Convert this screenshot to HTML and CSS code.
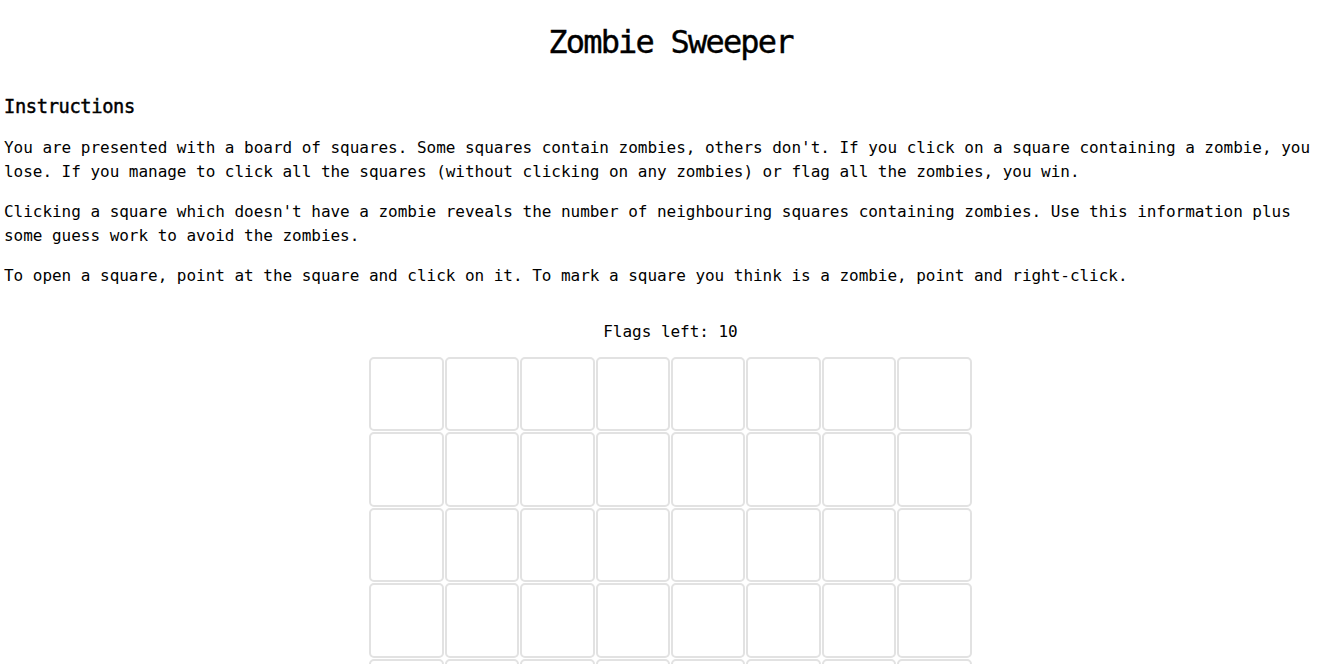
FILE: index.html
```html
<!DOCTYPE html>
<html lang="en">
<head>
<meta charset="utf-8">
<title>Zombie Sweeper</title>
<link rel="stylesheet" href="styles.css">
</head>
<body>
<main class="page">
  <h1 class="title">Zombie Sweeper</h1>
  <h3 class="subtitle">Instructions</h3>
  <p class="text">You are presented with a board of squares. Some squares contain zombies, others don't. If you click on a square containing a zombie, you lose. If you manage to click all the squares (without clicking on any zombies) or flag all the zombies, you win.</p>
  <p class="text">Clicking a square which doesn't have a zombie reveals the number of neighbouring squares containing zombies. Use this information plus some guess work to avoid the zombies.</p>
  <p class="text">To open a square, point at the square and click on it. To mark a square you think is a zombie, point and right-click.</p>
  <section class="game">
    <div class="flags">Flags left: 10</div>
    <div class="board">
      <div class="cell"></div><div class="cell"></div><div class="cell"></div><div class="cell"></div><div class="cell"></div><div class="cell"></div><div class="cell"></div><div class="cell"></div>
      <div class="cell"></div><div class="cell"></div><div class="cell"></div><div class="cell"></div><div class="cell"></div><div class="cell"></div><div class="cell"></div><div class="cell"></div>
      <div class="cell"></div><div class="cell"></div><div class="cell"></div><div class="cell"></div><div class="cell"></div><div class="cell"></div><div class="cell"></div><div class="cell"></div>
      <div class="cell"></div><div class="cell"></div><div class="cell"></div><div class="cell"></div><div class="cell"></div><div class="cell"></div><div class="cell"></div><div class="cell"></div>
      <div class="cell"></div><div class="cell"></div><div class="cell"></div><div class="cell"></div><div class="cell"></div><div class="cell"></div><div class="cell"></div><div class="cell"></div>
      <div class="cell"></div><div class="cell"></div><div class="cell"></div><div class="cell"></div><div class="cell"></div><div class="cell"></div><div class="cell"></div><div class="cell"></div>
      <div class="cell"></div><div class="cell"></div><div class="cell"></div><div class="cell"></div><div class="cell"></div><div class="cell"></div><div class="cell"></div><div class="cell"></div>
      <div class="cell"></div><div class="cell"></div><div class="cell"></div><div class="cell"></div><div class="cell"></div><div class="cell"></div><div class="cell"></div><div class="cell"></div>
    </div>
  </section>
</main>
</body>
</html>
```

FILE: styles.css
```css
html, body {
  margin: 0;
  padding: 0;
  background: #ffffff;
}

body {
  font-family: "DejaVu Sans Mono", "Liberation Mono", monospace;
  font-size: 16px;
  line-height: 24px;
  color: #000000;
  letter-spacing: -0.03px;
}

.page {
  padding: 0 4px;
}

.title {
  margin: 18px 0 0;
  font-size: 32px;
  line-height: 48px;
  font-weight: normal;
  text-align: center;
  letter-spacing: -1.8px;
  -webkit-text-stroke: 0.4px #000000;
}

.subtitle {
  margin: 27px 0 0;
  font-size: 18.72px;
  line-height: 28px;
  font-weight: normal;
  letter-spacing: -0.35px;
  -webkit-text-stroke: 0.45px #000000;
}

.text {
  margin: 15px 0 16px;
}

.text + .text {
  margin-top: 16px;
}

.game {
  margin-top: 32px;
  display: flex;
  flex-direction: column;
  align-items: center;
}

.flags {
  line-height: 24px;
  margin-bottom: 13px;
}

.board {
  display: grid;
  grid-template-columns: repeat(8, 74.4px);
  grid-auto-rows: 74.4px;
  gap: 1px;
}

.cell {
  box-sizing: border-box;
  border: 2px solid #e2e2e2;
  border-radius: 5px;
  background: #ffffff;
}
```
